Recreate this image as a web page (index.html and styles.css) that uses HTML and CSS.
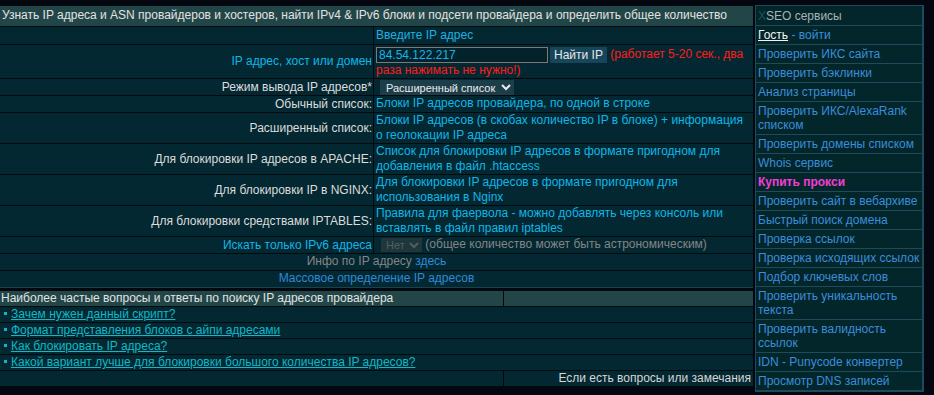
FILE: index.html
```html
<!DOCTYPE html>
<html>
<head>
    <title>Узнать IP адреса и ASN провайдеров</title>
    <link rel="stylesheet" href="styles.css">
</head>
<body>
<div class="page">
    <div class="main">
        <form class="form-grid">
            <div class="cell head span">Узнать IP адреса и ASN провайдеров и хостеров, найти IPv4 &amp; IPv6 блоки и подсети провайдера и определить общее количество</div>

            <div class="cell"></div>
            <div class="cell val hint">Введите IP адрес</div>

            <div class="cell label cyan">IP адрес, хост или домен</div>
            <div class="cell val block">
                <input class="ip-input" type="text" value="84.54.122.217"><button type="button" class="find-btn">Найти IP</button>
                <span class="warn">(работает 5-20 сек., два раза нажимать не нужно!)</span>
            </div>

            <div class="cell label">Режим вывода IP адресов*</div>
            <div class="cell val">
                <select class="mode">
                    <option>Обычный список</option>
                    <option selected>Расширенный список</option>
                    <option>Для APACHE</option>
                    <option>Для NGINX</option>
                    <option>Для IPTABLES</option>
                </select>
            </div>

            <div class="cell label">Обычный список:</div>
            <div class="cell val cyan">Блоки IP адресов провайдера, по одной в строке</div>

            <div class="cell label">Расширенный список:</div>
            <div class="cell val cyan">Блоки IP адресов (в скобах количество IP в блоке) + информация о геолокации IP адреса</div>

            <div class="cell label">Для блокировки IP адресов в APACHE:</div>
            <div class="cell val cyan">Список для блокировки IP адресов в формате пригодном для добавления в файл .htaccess</div>

            <div class="cell label">Для блокировки IP в NGINX:</div>
            <div class="cell val cyan">Для блокировки IP адресов в формате пригодном для использования в Nginx</div>

            <div class="cell label">Для блокировки средствами IPTABLES:</div>
            <div class="cell val cyan">Правила для фаервола - можно добавлять через консоль или вставлять в файл правил iptables</div>

            <div class="cell label cyan">Искать только IPv6 адреса</div>
            <div class="cell val muted">
                <select class="ipv6" disabled><option>Нет</option></select>&nbsp;(общее количество может быть астрономическим)
            </div>

            <div class="cell span center muted">Инфо по IP адресу <a href="#" class="blue">здесь</a></div>
            <div class="cell span center"><a href="#" class="blue">Массовое определение IP адресов</a></div>
        </form>

        <div class="faq">
            <div class="cell head">Наиболее частые вопросы и ответы по поиску IP адресов провайдера</div>
            <div class="cell head"></div>
            <div class="cell span"><span class="dot"></span><a href="#" class="faq-link">Зачем нужен данный скрипт?</a></div>
            <div class="cell span"><span class="dot"></span><a href="#" class="faq-link">Формат представления блоков с айпи адресами</a></div>
            <div class="cell span"><span class="dot"></span><a href="#" class="faq-link">Как блокировать IP адреса?</a></div>
            <div class="cell span"><span class="dot"></span><a href="#" class="faq-link">Какой вариант лучше для блокировки большого количества IP адресов?</a></div>
            <div class="cell"></div>
            <div class="cell right light">Если есть вопросы или замечания</div>
        </div>
    </div>

    <aside class="side">
        <div class="side-item side-head"><span class="x">X</span>SEO сервисы</div>
        <div class="side-item"><a href="#" class="guest">Гость</a> - <a href="#">войти</a></div>
        <div class="side-item"><a href="#">Проверить ИКС сайта</a></div>
        <div class="side-item"><a href="#">Проверить бэклинки</a></div>
        <div class="side-item"><a href="#">Анализ страницы</a></div>
        <div class="side-item"><a href="#">Проверить ИКС/AlexaRank списком</a></div>
        <div class="side-item"><a href="#">Проверить домены списком</a></div>
        <div class="side-item"><a href="#">Whois сервис</a></div>
        <div class="side-item"><a href="#" class="proxy">Купить прокси</a></div>
        <div class="side-item"><a href="#">Проверить сайт в вебархиве</a></div>
        <div class="side-item"><a href="#">Быстрый поиск домена</a></div>
        <div class="side-item"><a href="#">Проверка ссылок</a></div>
        <div class="side-item"><a href="#">Проверка исходящих ссылок</a></div>
        <div class="side-item"><a href="#">Подбор ключевых слов</a></div>
        <div class="side-item"><a href="#">Проверить уникальность текста</a></div>
        <div class="side-item"><a href="#">Проверить валидность ссылок</a></div>
        <div class="side-item"><a href="#">IDN - Punycode конвертер</a></div>
        <div class="side-item"><a href="#">Просмотр DNS записей</a></div>
    </aside>
</div>
</body>
</html>
```

FILE: styles.css
```css
body {
    margin: 0;
    background-color: #04070f;
    font-family: "Liberation Sans", Arial, sans-serif;
    font-size: 12px;
    line-height: 15px;
    color: #dcdcdc;
}
a {
    text-decoration: none;
}
.page {
    display: flex;
    align-items: flex-start;
    padding-top: 5px;
}
.main {
    width: 753px;
    flex: none;
}

/* form table */
.form-grid {
    display: grid;
    grid-template-columns: 373px 379px;
    gap: 1px;
    margin: 0;
    padding-top: 1px;
    background-color: #010b0f;
    border-bottom: 1px solid #174250;
}
.cell {
    background-color: #032831;
    padding: 0 2px;
    min-height: 15px;
}
.form-grid .cell {
    min-height: 16px;
}
.span {
    grid-column: 1 / -1;
}
.head {
    background-color: #224648;
    color: #e2e2e2;
    padding: 2px 2px;
}
.form-grid .head {
    min-height: 15px;
    padding-bottom: 3px;
}
.label {
    display: flex;
    align-items: center;
    justify-content: flex-end;
    text-align: right;
    padding-right: 1px;
}
.val {
    padding-left: 2px;
}
.block {
    padding-top: 2px;
}
.hint {
    color: #1bb2e2;
    padding-top: 1px;
}
.cyan {
    color: #10b6e8;
}
.muted {
    color: #858585;
}
.center {
    text-align: center;
}
.right {
    text-align: right;
}
.light {
    color: #d6d6d6;
}
.blue {
    color: #2e8ad8;
}
.ip-input {
    width: 166px;
    height: 14px;
    padding: 0 2px;
    margin: 0 2px 0 0;
    border: 1px solid #7a7a7a;
    background-color: #03222b;
    color: #12b6e6;
    font-family: "Liberation Sans", Arial, sans-serif;
    font-size: 12px;
    vertical-align: top;
}
.find-btn {
    height: 16px;
    padding: 0 4px;
    margin: 0;
    border: none;
    background-color: #17465a;
    color: #e8e8e8;
    font-family: "Liberation Sans", Arial, sans-serif;
    font-size: 12px;
    line-height: 16px;
    vertical-align: top;
}
.warn {
    color: #ff1c1c;
}
.mode {
    height: 15px;
    margin: 1px 0 0 4px;
    padding: 0 2px;
    border: none;
    background-color: #1c3e4b;
    color: #ececec;
    font-family: "Liberation Sans", Arial, sans-serif;
    font-size: 11px;
    vertical-align: top;
}
.ipv6 {
    height: 14px;
    margin: 1px 0 0 5px;
    padding: 0 1px;
    border: none;
    background-color: #2b3c40;
    color: #6c7a7c;
    font-family: "Liberation Sans", Arial, sans-serif;
    font-size: 11px;
    vertical-align: top;
}

/* faq */
.faq {
    display: grid;
    grid-template-columns: 503px 249px;
    gap: 1px;
    margin-top: 2px;
    padding: 1px 0;
    background-color: #010b0f;
}
.faq .head {
    padding: 0 1px;
}
.dot {
    display: inline-block;
    width: 3px;
    height: 3px;
    margin: 0 4px 2px 2px;
    background-color: #10b6c8;
    vertical-align: middle;
}
.faq-link {
    color: #10b8c8;
    text-decoration: underline;
}

/* sidebar */
.side {
    width: 166px;
    margin-left: 2px;
    border: 1px solid #1d4b5c;
    border-right-width: 2px;
    background-color: #03262a;
}
.side-item {
    padding: 2px 2px;
    line-height: 14px;
    border-bottom: 1px solid #1d4b5c;
    color: #3b8ddc;
}
.side-item a {
    color: #3b8ddc;
}
.side-head {
    color: #a9b3b6;
    padding-top: 3px;
}
.x {
    color: #1a5656;
}
.side-item a.guest {
    color: #f2f2f2;
    text-decoration: underline;
}
.side-item a.proxy {
    color: #f23fd6;
    font-weight: bold;
}
```
